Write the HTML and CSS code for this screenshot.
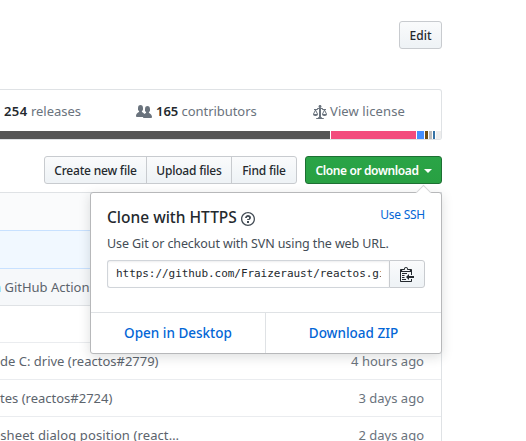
FILE: index.html
```
<!DOCTYPE html>
<html lang="en">
<head>
<meta charset="utf-8">
<title>Repository</title>
<link rel="stylesheet" href="styles.css">
</head>
<body>
<main class="page">
  <header class="top"><button class="btn edit">Edit</button></header>
  <section class="summary">
    <div class="stats">
      <span class="stat releases"><b>254</b> releases</span>
      <span class="stat contributors"><svg width="16" height="16" viewBox="0 0 16 16"><path fill="currentColor" fill-rule="evenodd" d="M16 12.999c0 .439-.45 1-1 1H7.995c-.539 0-.994-.447-.995-.999H1c-.54 0-1-.561-1-1 0-2.634 3-4 3-4s.229-.409 0-1c-.841-.621-1.058-.59-1-3 .058-2.419 1.367-3 2.500-3s2.442.58 2.500 3c.058 2.410-.159 2.379-1 3-.229.590 0 1 0 1s1.549.711 2.420 2.088C9.196 9.369 10 8.999 10 8.999s.229-.409 0-1c-.841-.620-1.058-.590-1-3 .058-2.419 1.367-3 2.500-3s2.437.581 2.495 3c.059 2.410-.158 2.380-1 3-.229.590 0 1 0 1s3.005 1.366 3.005 4z"/></svg><b>165</b> contributors</span>
      <span class="stat license"><svg width="14" height="16" viewBox="0 0 14 16"><path fill="currentColor" fill-rule="evenodd" d="M7 4c-.83 0-1.500-.670-1.500-1.500S6.170 1 7 1s1.500.670 1.500 1.500S7.830 4 7 4zm7 6c0 1.110-.890 2-2 2h-1c-1.110 0-2-.890-2-2l2-4h-1c-.550 0-1-.450-1-1H8v8c.420 0 1 .450 1 1h1c.420 0 1 .450 1 1H3c0-.550.580-1 1-1h1c0-.550.580-1 1-1h.030L6 5H5c0 .550-.450 1-1 1H3l2 4c0 1.110-.890 2-2 2H2c-1.110 0-2-.890-2-2l2-4H1V5h3c0-.550.450-1 1-1h4c.550 0 1 .450 1 1h3v1h-1l2 4zM2.500 7L1 10h3L2.500 7zM13 10l-1.500-3-1.500 3h3z"/></svg>View license</span>
    </div>
    <div class="languages"><i class="l1"></i><i class="l2"></i><i class="l3"></i><i class="l4"></i><i class="l5"></i><i class="l6"></i><i class="l7"></i></div>
  </section>
  <nav class="actions">
    <div class="group"><button class="btn create">Create new file</button><button class="btn upload">Upload files</button><button class="btn find">Find file</button></div>
    <div class="clone">
      <button class="btn primary"><span>Clone or download</span><i class="caret"></i></button>
      <section class="popover">
        <div class="body">
          <div class="head"><h4><span>Clone with HTTPS</span><svg width="14" height="16" viewBox="0 0 14 16"><path fill="currentColor" fill-rule="evenodd" d="M6 10h2v2H6v-2zm4-3.500C10 8.640 8 9 8 9H6c0-.550.450-1 1-1h.500c.280 0 .500-.220.500-.500v-1c0-.280-.220-.500-.500-.500h-1c-.280 0-.500.220-.500.500V7H4c0-1.500 1.500-3 3-3s3 1 3 2.500zM7 2.300c3.140 0 5.700 2.560 5.700 5.700s-2.560 5.700-5.700 5.700A5.710 5.710 0 0 1 1.300 8c0-3.140 2.560-5.700 5.700-5.700zM7 1C3.140 1 0 4.140 0 8s3.140 7 7 7 7-3.140 7-7-3.140-7-7-7z"/></svg></h4><a class="ssh">Use SSH</a></div>
          <p>Use Git or checkout with SVN using the web URL.</p>
          <div class="field"><div class="url"><span>https://github.com/Fraizeraust/reactos.git</span></div><button class="btn copy" aria-label="Copy"><svg width="14" height="16" viewBox="0 0 14 16"><path fill="currentColor" fill-rule="evenodd" d="M2 13h4v1H2v-1zm5-6H2v1h5V7zm2 3V8l-3 3 3 3v-2h5v-2H9zM4.500 9H2v1h2.500V9zM2 12h2.500v-1H2v1zm9 1h1v2c-.020.280-.110.520-.300.700-.190.180-.420.280-.700.300H1c-.550 0-1-.450-1-1V4c0-.550.450-1 1-1h3c0-1.110.890-2 2-2 1.110 0 2 .890 2 2h3c.550 0 1 .450 1 1v5h-1V6H1v9h10v-2zM2 5h8c0-.550-.450-1-1-1H8c-.550 0-1-.450-1-1s-.450-1-1-1-1 .450-1 1-.450 1-1 1H3c-.550 0-1 .450-1 1z"/></svg></button></div>
        </div>
        <div class="foot"><a class="desktop">Open in Desktop</a><a class="zip">Download ZIP</a></div>
      </section>
    </div>
  </nav>
  <section class="files">
    <div class="row intro"></div>
    <div class="row tease"></div>
    <div class="row commit"><span class="msg m0"><a>n</a> GitHub Actions</span></div>
    <div class="row"></div>
    <div class="row"><span class="msg m1">de C: drive (reactos#2779)</span><span class="age">4 hours ago</span></div>
    <div class="row"><span class="msg m2">tes (reactos#2724)</span><span class="age">3 days ago</span></div>
    <div class="row"><span class="msg m3">-sheet dialog position (react…</span><span class="age">2 days ago</span></div>
  </section>
</main>
</body>
</html>
```
FILE: styles.css
```
* { box-sizing: border-box; }
body { margin: 0; width: 526px; height: 441px; overflow: hidden; background: #fff; color: #24292e; font: 13px/20px "Noto Sans", "Open Sans", sans-serif; }
svg { display: block; flex: none; }
b { font-weight: 600; color: #24292e; }
a { color: #0366d6; }
.page { width: 442px; height: 441px; padding-top: 21px; }
.top { display: flex; justify-content: flex-end; height: 68px; }
.btn { display: flex; align-items: center; justify-content: center; height: 28px; padding: 0; border: 1px solid #c8cbcf; border-radius: 3px; background: linear-gradient(#fafbfc, #eff3f6 90%); color: #24292e; font: 500 12px/18px "Noto Sans", sans-serif; letter-spacing: -.2px; white-space: nowrap; }
.edit { width: 43px; padding-top: 1px; letter-spacing: 0; }
.group .btn { padding-top: 1px; }
.summary { height: 51px; border: 1px solid #dfe2e5; border-left: 0; border-radius: 0 3px 3px 0; overflow: hidden; }
.stats { display: flex; height: 41px; align-items: center; color: #6a737d; white-space: nowrap; }
.stat { display: flex; align-items: center; white-space: pre; }
.stats svg { margin: 2px 4px 0 0; }
.releases { width: 136px; padding-left: 4px; }
.releases b { letter-spacing: .4px; }
.contributors { width: 177px; letter-spacing: -.05px; }
.license { letter-spacing: .1px; }
.license svg { margin-right: 3px; }
.languages { display: flex; gap: 1px; height: 8px; }
.l1 { width: 330px; background: #555; }
.l2 { width: 85px; background: #f34b7d; }
.l3 { width: 7px; background: #438eff; }
.l4 { width: 3px; background: #6e4c13; }
.l5 { width: 3px; background: #bcbcbc; }
.l6 { width: 2px; background: #3572a5; }
.l7 { flex: 1; background: #ededed; }
.actions { display: flex; gap: 8px; margin: 16px 0 8px; padding-left: 44px; }
.group { display: flex; }
.group .btn { border-radius: 0; }
.group .create { width: 103px; border-radius: 3px 0 0 3px; }
.group .upload { width: 86px; margin-left: -1px; }
.group .find { width: 66px; margin-left: -1px; border-radius: 0 3px 3px 0; }
.clone { position: relative; width: 137px; }
.primary { width: 137px; padding-top: 1px; border-color: #1d6f33; background: linear-gradient(#2aa447, #28a042); color: #fff; gap: 5px; font-weight: 600; letter-spacing: -.38px; }
.caret { border: 4px solid transparent; border-top-color: #fff; border-bottom: 0; }
.popover { position: absolute; z-index: 2; top: 36px; right: 0; width: 352px; height: 162px; border: 1px solid #b7b8ba; border-radius: 3px; background: #fff; box-shadow: 0 3px 12px rgba(27,31,35,.15); }
.popover::before { content: ""; position: absolute; top: -6px; right: 12px; width: 10px; height: 10px; transform: rotate(45deg); border: 1px solid #d5d6d8; border-right: 0; border-bottom: 0; background: #fff; }
.body { height: 119px; padding: 15px 16px; }
.head { display: flex; justify-content: space-between; height: 22px; }
h4 { display: flex; align-items: center; gap: 4px; margin: -2px 0 0; font: 500 15.5px/20px "Noto Sans", sans-serif; height: 22px; }
h4 svg { margin-top: 3px; color: #444d56; }
.ssh { font-size: 12px; line-height: 14px; letter-spacing: -.25px; }
.body p { margin: 4px 0 6px; color: #444d56; line-height: 20px; font-size: 12.5px; letter-spacing: -.1px; white-space: nowrap; }
.field { display: flex; }
.url { width: 283px; height: 28px; padding: 0 8px; border: 1px solid #d1d5da; border-right: 0; border-radius: 3px 0 0 3px; box-shadow: inset 0 1px 2px rgba(27,31,35,.075); font: 11px/26px "DejaVu Sans Mono", monospace; letter-spacing: -.05px; }
.url span { display: block; overflow: hidden; white-space: nowrap; width: 265px; }
.copy { width: 36px; border-radius: 0 3px 3px 0; }
.foot { display: flex; height: 41px; border-top: 1px solid #dfe2e5; font-weight: 500; font-size: 13.5px; line-height: 40px; text-align: center; }
.desktop { width: 175px; border-right: 1px solid #dfe2e5; }
.zip { flex: 1; }
.files { border: 1px solid #dfe2e5; border-left: 0; border-bottom: 0; height: 249px; overflow: hidden; color: #6a737d; }
.row { display: flex; justify-content: space-between; align-items: center; height: 37px; border-bottom: 1px solid #eaecef; padding-right: 17px; white-space: nowrap; }
.intro { height: 38px; background: #fafbfc; border-color: #c8e1ff; }
.tease { height: 38px; background: #f1f8ff; border-color: #c8e1ff; }
.commit { background: #f6f8fa; border-color: #dfe2e5; }
.msg { color: #5c646d; }
.m0 { margin-left: -7px; }
.m3 { margin-left: -4px; letter-spacing: .1px; }
```
